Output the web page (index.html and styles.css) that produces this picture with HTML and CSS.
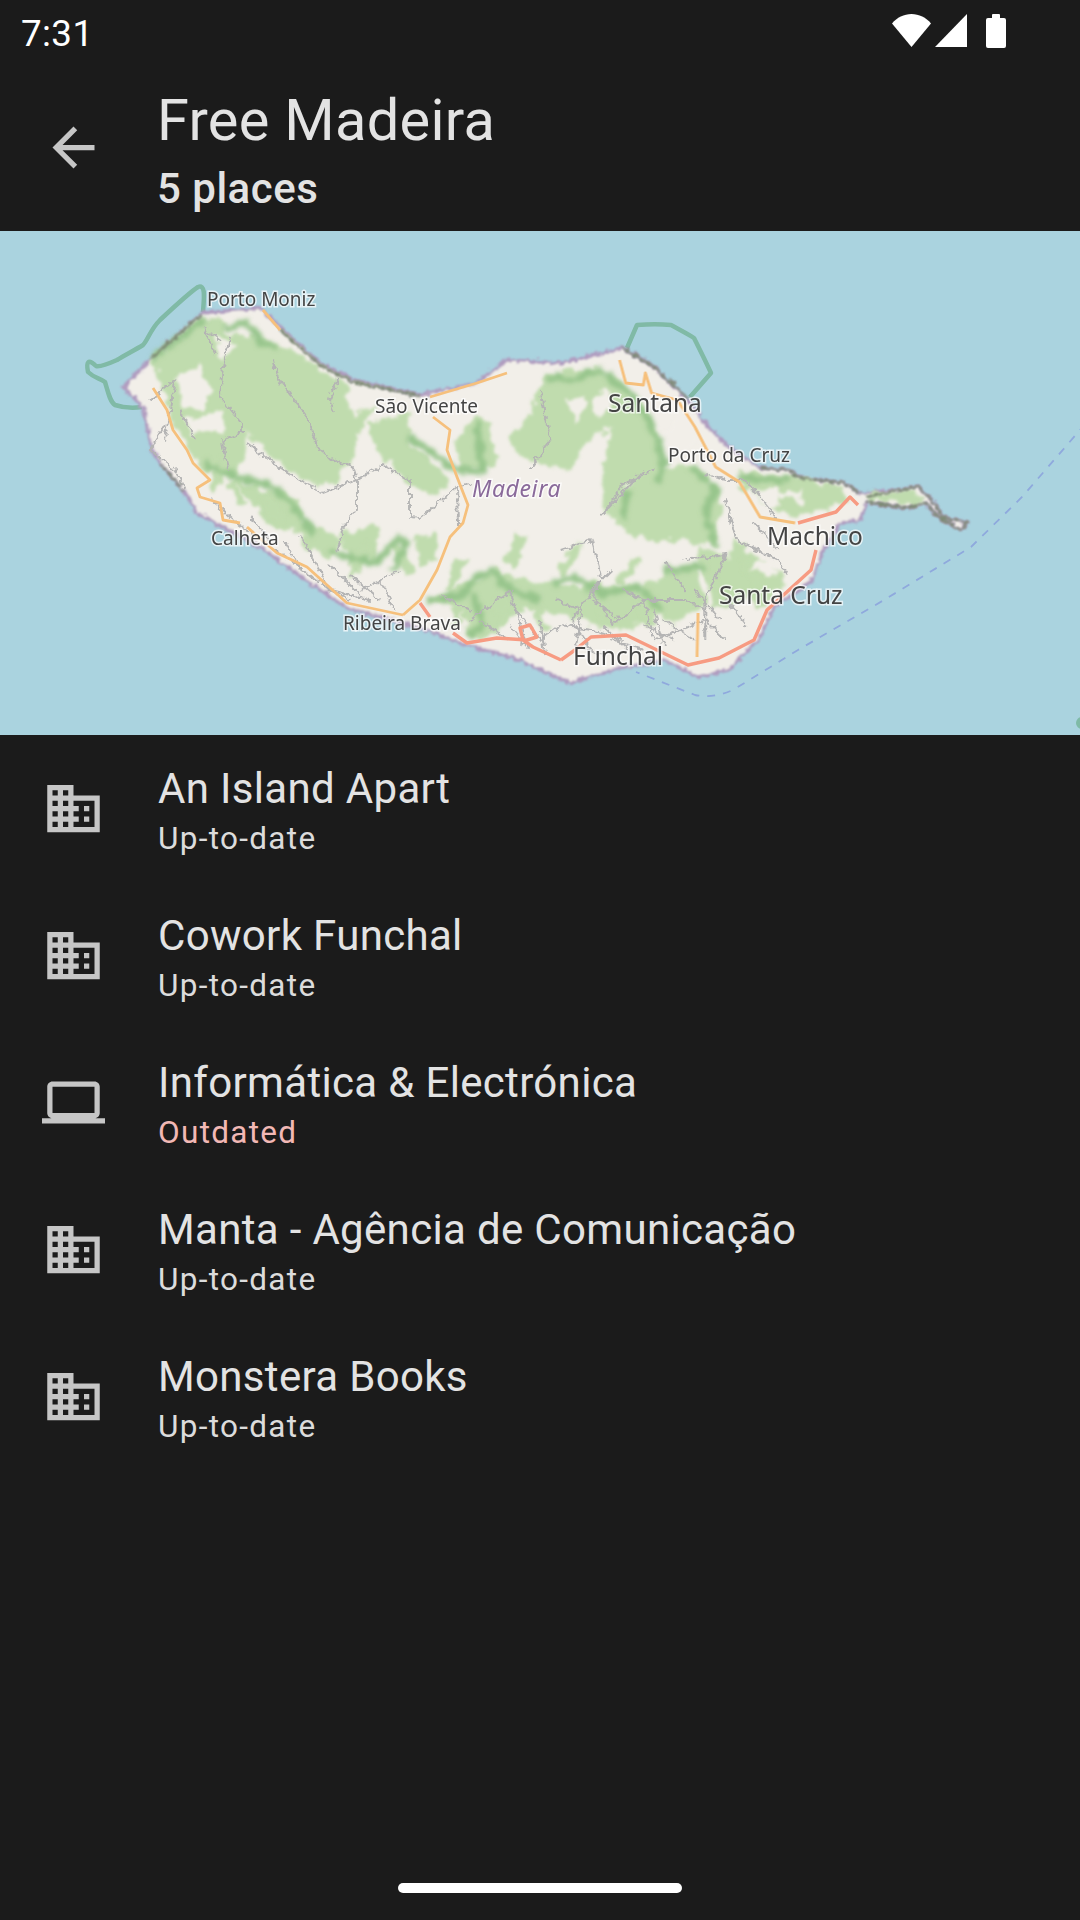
FILE: index.html
```html
<!DOCTYPE html>
<html lang="en">
<head>
    <meta charset="UTF-8">
    <meta name="viewport" content="width=device-width, initial-scale=1.0">
    <title>Free Madeira</title>
    <link rel="stylesheet" href="styles.css">
</head>
<body>
    <svg class="defs" width="0" height="0">
        <symbol id="icon-domain" viewBox="0 0 24 24">
            <path d="M12 7V3H2v18h20V7H12zM6 19H4v-2h2v2zm0-4H4v-2h2v2zm0-4H4V9h2v2zm0-4H4V5h2v2zm4 12H8v-2h2v2zm0-4H8v-2h2v2zm0-4H8V9h2v2zm0-4H8V5h2v2zm10 12h-8v-2h2v-2h-2v-2h2v-2h-2V9h8v10zm-2-8h-2v2h2v-2zm0 4h-2v2h2v-2z"/>
        </symbol>
        <symbol id="icon-computer" viewBox="0 0 24 24">
            <path d="M20 18c1.1 0 1.99-.9 1.99-2L22 6c0-1.1-.9-2-2-2H4c-1.1 0-2 .9-2 2v10c0 1.1.9 2 2 2H0v2h24v-2h-4zM4 6h16v10H4V6z"/>
        </symbol>
    </svg>

    <div class="status-bar">
        <span class="time">7:31</span>
        <div class="status-icons">
            <svg width="39" height="33" viewBox="0 0 39 33"><path d="M19.5 33L0 9.5C5 3.5 12 0 19.5 0S34 3.5 39 9.5z"/></svg>
            <svg class="signal" width="32" height="33" viewBox="0 0 32 33"><path d="M0 33L32 0v33z"/></svg>
            <svg class="battery" width="20" height="34" viewBox="0 0 20 34"><path d="M6 1a1 1 0 0 1 1-1h6a1 1 0 0 1 1 1v3h4a2 2 0 0 1 2 2v26a2 2 0 0 1-2 2H2a2 2 0 0 1-2-2V6a2 2 0 0 1 2-2h4z"/></svg>
        </div>
    </div>

    <header class="app-bar">
        <svg class="icon" viewBox="0 0 24 24"><path d="M20 11H7.83l5.59-5.59L12 4l-8 8 8 8 1.41-1.41L7.83 13H20v-2z"/></svg>
        <div class="app-title">
            <h1>Free Madeira</h1>
            <p>5 places</p>
        </div>
    </header>

    <svg class="map" viewBox="0 231 1080 504" width="1080" height="504">
        <defs>
            <filter id="rough" x="-5%" y="-5%" width="110%" height="110%">
                <feTurbulence type="fractalNoise" baseFrequency="0.08" numOctaves="3" seed="4"/>
                <feDisplacementMap in="SourceGraphic" scale="16" xChannelSelector="R" yChannelSelector="G"/>
                <feGaussianBlur stdDeviation="1.8"/>
            </filter>
            <filter id="band" x="-5%" y="-5%" width="110%" height="110%">
                <feTurbulence type="fractalNoise" baseFrequency="0.11" numOctaves="3" seed="7"/>
                <feDisplacementMap in="SourceGraphic" scale="10" xChannelSelector="R" yChannelSelector="G"/>
                <feGaussianBlur stdDeviation="2"/>
            </filter>
            <filter id="wiggle" x="-5%" y="-5%" width="110%" height="110%">
                <feTurbulence type="fractalNoise" baseFrequency="0.16" numOctaves="3" seed="9"/>
                <feDisplacementMap in="SourceGraphic" scale="8" xChannelSelector="R" yChannelSelector="G"/>
                <feGaussianBlur stdDeviation="0.6"/>
            </filter>
            <filter id="coast" x="-5%" y="-5%" width="110%" height="110%">
                <feTurbulence type="fractalNoise" baseFrequency="0.2" numOctaves="2" seed="3"/>
                <feDisplacementMap in="SourceGraphic" scale="7" xChannelSelector="R" yChannelSelector="G"/>
                <feGaussianBlur stdDeviation="0.8"/>
            </filter>
            <filter id="soft"><feGaussianBlur stdDeviation="0.7"/></filter>
        </defs>

        <g class="boundary" filter="url(#soft)">
            <path d="M1085 424L1080 430L1022 497L971 547L884 600L798 650L733 690C716 697 705 697 695 695L636 672"/>
        </g>
        <circle class="islet" cx="1082" cy="723" r="6"/>

        <g class="protected" filter="url(#soft)">
            <path d="M203 312C204 298 206 284 198 287C190 292 175 306 160 320C150 330 148 340 143 345C135 350 125 355 117 360C108 364 100 367 96 366C88 358 86 362 88 372C94 378 100 378 105 382C108 392 110 402 115 405C124 408 134 408 142 407"/>
            <path d="M627 348L637 325C650 324 660 324 671 325C680 330 688 334 694 338C700 350 706 362 711 373L690 397"/>
        </g>

        <path class="land" filter="url(#coast)" d="M123 387L153 357L203 313L260 308L280 327L320 363L353 380L420 395L477 383L507 360L561 363L574 360L623 348L654 367L688 400L705 423L728 447L760 468L788 470L801 478L843 483L860 493L898 490L919 487L932 500L943 517L967 523L961 530L936 515L925 502L909 508L867 502L860 520L840 523L822 553L812 580L774 607L760 637L729 670L698 677L664 660L620 668L571 683L540 670L520 660L460 643L427 630L347 608L310 583L260 547L197 513L183 490L160 463L152 450L143 407z"/>

        <g class="green-light" filter="url(#rough)">
            <path d="M227 333L265 340L280 345L330 375L350 385L345 400L355 415L375 405L355 440L353 460L345 470L340 482L320 485L293 473L267 450L243 433L225 400L225 370z"/>
            <path d="M370 423L410 413L407 440L443 473L453 483L427 497L407 480L383 460L370 440z"/>
            <path d="M473 417L490 420L497 470L460 472L455 440z"/>
            <path d="M340 533L380 523L378 560L350 565z"/>
            <path d="M413 537L437 535L437 560L420 567z"/>
            <path d="M150 362L205 318L228 322L225 390L245 440L240 475L205 472L175 430L165 395z"/>
            <path d="M300 520L345 540L330 560L305 545z"/>
            <path d="M233 480L300 500L305 535L270 525z"/>
            <path d="M427 600L493 572L540 582L540 612L520 612L487 637L467 637L462 610z"/>
            <g transform="translate(-17.8 0) scale(1.033 1)">
                <path d="M507 440L530 415L545 375L597 368L627 392L650 425L660 465L650 478L625 480L605 510L600 470L610 430L590 435L570 470L530 460z"/>
                <path d="M603 510L640 470L690 465L715 495L712 547L680 540L640 540L620 530z"/>
                <path d="M733 473L780 477L833 487L837 503L793 517L757 507z"/>
                <path d="M857 495L905 492L915 505L897 505L860 500z"/>
                <path d="M727 540L780 580L753 607L713 573z"/>
                <path d="M690 545L720 555L740 600L710 610z"/>
                <path d="M540 582L637 587L657 613L620 632L560 615L540 612z"/>
                <path d="M630 590L690 560L700 600L670 625z"/>
            </g>
        </g>
        <g class="streak" filter="url(#rough)">
            <path d="M460 600L455 628M500 590L505 625M535 600L545 632M600 600L605 628M640 600L652 628"/>
            <path d="M450 590L462 560M510 565L522 535M560 575L578 545M620 585L635 560"/>
            <path d="M365 545L352 578M395 545L410 575M230 480L245 505M265 495L280 525"/>
            <path d="M225 460L210 490M700 560L720 590M745 560L760 590M740 490L760 475"/>
        </g>
        <g class="white-patch" filter="url(#rough)">
            <path d="M178 375L200 362L212 392L205 412L182 405z"/>
            <path d="M185 418L222 412L225 430L195 435z"/>
            <path d="M215 335L235 345L222 360z"/>
            <g transform="translate(-17.8 0) scale(1.033 1)">
                <path d="M750 495L770 485L775 505L755 512z"/>
                <path d="M590 400L605 385L610 410L595 420z"/>
                <path d="M655 440L680 405L690 440L670 465z"/>
                <path d="M770 490L795 490L790 505z"/>
                <path d="M565 400L585 395L575 425z"/>
                <path d="M745 570L760 555L770 575z"/>
            </g>
        </g>
        <g class="ridge" filter="url(#band)">
            <path d="M150 360L205 318M223 330L247 323L263 343L277 347"/>
            <path d="M203 463L240 478L273 487L293 505L313 533"/>
            <path d="M327 550L360 560L377 563L397 537L407 543L393 570"/>
            <path d="M407 437L423 447L450 467L480 473M477 423L483 473"/>
            <path d="M427 600L460 597L477 577L493 570L510 590L540 600M473 593L483 627L467 637"/>
            <g transform="translate(-17.8 0) scale(1.033 1)">
                <path d="M547 377L573 380L597 370L627 393L647 423L660 460L653 483"/>
                <path d="M687 467L710 490L700 513L710 547"/>
                <path d="M553 583L573 577L600 593L637 587L657 610M660 570L700 567"/>
                <path d="M733 478L780 480M620 520L625 490"/>
            </g>
        </g>

        <g class="road-grey" filter="url(#wiggle)">
            <path d="M230 337L223 367L220 397L242 423L242 433L223 440L228 470"/>
            <path d="M273 360L277 377L307 417L317 447L333 460L353 467L357 480L357 510L343 527L337 553"/>
            <path d="M247 443L293 477L323 493L357 480L383 465L410 480L410 517L420 518L457 487L470 483"/>
            <path d="M457 487L458 527M338 380L330 400L335 412"/>
            <path d="M165 425L150 450L175 470L185 490M212 500L240 525L290 560L330 590L370 600"/>
            <path d="M470 620L510 590L525 640M300 535L330 590L350 600"/>
            <path d="M360 590L400 570M440 595L470 610"/>
            <path d="M350 575L380 600M380 580L395 610M330 565L360 595M285 540L300 570M250 515L270 540"/>
            <path d="M150 400L175 380L165 440M180 410L195 440M220 340L205 330L215 355"/>
            <g transform="translate(-17.8 0) scale(1.033 1)">
                <path d="M650 470L620 485L600 515L640 470M610 570L590 590L610 625L640 600L680 600L700 610M720 500L730 540L770 560L780 575"/>
                <path d="M560 550L590 540L600 580L570 620L590 650M620 590L640 600L650 640L700 620L720 640M510 600L540 640L560 625L590 630L620 640M680 560L720 555L700 600L700 640"/>
                <path d="M700 475L720 480L740 480L770 520M540 390L550 440L530 470"/>
                <path d="M555 600L580 610L575 645L600 655M610 640L640 650M590 600L620 620M640 625L670 640M540 620L545 655M510 625L530 650M480 620L510 640"/>
                <path d="M660 620L690 640M720 600L740 625M745 520L770 550M660 560L680 590M600 625L625 650M650 610L660 645M690 590L715 620"/>
            </g>
        </g>
        <path class="coast-dark" filter="url(#coast)" d="M280 330L320 365L353 382L420 396M153 357L200 316M623 348L654 367L688 398M760 468L788 470L801 478L843 483L860 493M867 497L898 490L919 487L932 500L943 517L967 523L961 530L936 515L925 502L909 508L867 502M160 463L183 490"/>

        <g class="road-orange" filter="url(#soft)">
            <path d="M433 417L450 430L447 450L457 477L468 505L463 523L450 537L437 570L420 600L403 615"/>
            <path d="M430 397L477 383L507 373"/>
            <path d="M153 388L167 410L173 430L187 450L193 463L210 480L197 488L200 497L220 503L223 520L240 523"/>
            <path d="M247 527L277 553L307 567L347 603L403 615"/>
            <path d="M263 310L280 330"/>
            <g transform="translate(-17.8 0) scale(1.033 1)">
                <path d="M617 360L623 383L640 385L642 373L648 393L673 400L690 427L710 467L733 482L753 517L787 523"/>
                <path d="M693 613L692 657"/>
            </g>
        </g>
        <g class="road-red" filter="url(#soft)">
            <path d="M420 603L430 617M453 633L467 643L497 638L527 640L537 637L530 625L520 628L523 640L533 647L561 660"/>
            <path d="M561 660L575 650L591 637L626 635L657 650L688 665L719 658L754 640L767 610L811 570L816 550"/>
            <path d="M798 523L836 512L850 497L858 505"/>
        </g>

        <g class="labels">
            <text x="207" y="306">Porto Moniz</text>
            <text x="375" y="413">São Vicente</text>
            <text x="211" y="545">Calheta</text>
            <text x="343" y="630">Ribeira Brava</text>
            <text x="668" y="462">Porto da Cruz</text>
            <text class="town" x="608" y="412">Santana</text>
            <text class="town" x="767" y="545">Machico</text>
            <text class="town" x="719" y="604">Santa Cruz</text>
            <text class="town" x="573" y="665">Funchal</text>
            <text class="island" x="472" y="497">Madeira</text>
        </g>
    </svg>

    <ul class="places">
        <li>
            <svg class="icon"><use href="#icon-domain"/></svg>
            <div>
                <h2>An Island Apart</h2>
                <p>Up-to-date</p>
            </div>
        </li>
        <li>
            <svg class="icon"><use href="#icon-domain"/></svg>
            <div>
                <h2>Cowork Funchal</h2>
                <p>Up-to-date</p>
            </div>
        </li>
        <li>
            <svg class="icon"><use href="#icon-computer"/></svg>
            <div>
                <h2>Informática &amp; Electrónica</h2>
                <p class="outdated">Outdated</p>
            </div>
        </li>
        <li>
            <svg class="icon"><use href="#icon-domain"/></svg>
            <div>
                <h2>Manta - Agência de Comunicação</h2>
                <p>Up-to-date</p>
            </div>
        </li>
        <li>
            <svg class="icon"><use href="#icon-domain"/></svg>
            <div>
                <h2>Monstera Books</h2>
                <p>Up-to-date</p>
            </div>
        </li>
    </ul>

    <div class="gesture-bar"></div>
</body>
</html>
```

FILE: styles.css
```css
body {
    font-family: Roboto, sans-serif;
    margin: 0;
    padding: 0;
    width: 1080px;
    height: 1920px;
    overflow: hidden;
    background-color: #1b1b1b;
    display: flex;
    flex-direction: column;
}
.defs {
    position: absolute;
}
.status-bar {
    height: 63px;
    flex: none;
    padding: 0 74px 0 21px;
    display: flex;
    justify-content: space-between;
    align-items: center;
    color: white;
}
.time {
    font-size: 36.75px;
    line-height: 63px;
    padding-top: 4px;
    letter-spacing: 0.4px;
}
.status-icons {
    display: flex;
    align-items: flex-start;
    margin-top: -2px;
}
.status-icons svg {
    fill: white;
    display: block;
}
.status-icons .signal {
    margin-left: 4px;
}
.status-icons .battery {
    margin-left: 19px;
}
.icon {
    width: 63px;
    height: 63px;
    flex: none;
    fill: #c6c6c6;
    margin: 0 53px 0 42px;
}
.app-bar {
    height: 168px;
    flex: none;
    display: flex;
    align-items: center;
}
.app-title {
    padding-top: 9px;
    margin-left: -1px;
}
.app-bar h1 {
    margin: 0;
    font-size: 57.75px;
    font-weight: 400;
    line-height: 66px;
    letter-spacing: 0.3px;
    color: #e3e3e3;
}
.app-bar p {
    margin: 9px 0 0;
    font-size: 42px;
    font-weight: 500;
    line-height: 54px;
    letter-spacing: 0.5px;
    color: #e3e3e3;
}
.map {
    display: block;
    flex: none;
    background-color: #aad3df;
}
.boundary path {
    fill: none;
    stroke: #8fa9dd;
    stroke-width: 1.8;
    stroke-dasharray: 8 8;
}
.islet {
    fill: #7fbaa6;
}
.protected path {
    fill: none;
    stroke: #80baa6;
    stroke-width: 4.5;
    stroke-linejoin: round;
}
.land {
    fill: #f2efe9;
    stroke: #b09cc0;
    stroke-width: 3.5;
    stroke-linejoin: round;
}
.green-light {
    fill: #c0dcae;
}
.streak path {
    fill: none;
    stroke: #c0dcae;
    stroke-width: 9;
}
.white-patch {
    fill: #f2efe9;
}
.ridge path {
    fill: none;
    stroke: #97c58c;
    stroke-width: 7;
    stroke-linejoin: round;
}
.road-grey path {
    fill: none;
    stroke: #b4b4b4;
    stroke-width: 1.9;
}
.coast-dark {
    fill: none;
    stroke: #7d8a74;
    stroke-width: 2.4;
}
.road-orange path {
    fill: none;
    stroke: #f6c07c;
    stroke-width: 2.8;
    stroke-linejoin: round;
}
.road-red path {
    fill: none;
    stroke: #f79b82;
    stroke-width: 3.4;
    stroke-linejoin: round;
}
.labels text {
    font-family: "Noto Sans", sans-serif;
    font-size: 19px;
    fill: #444;
    stroke: rgba(255,255,255,0.7);
    stroke-width: 3px;
    paint-order: stroke;
    filter: blur(0.6px);
}
.labels .town {
    font-size: 24.5px;
}
.labels .island {
    font-size: 23px;
    font-style: italic;
    fill: #8a6a9a;
    letter-spacing: 0.6px;
}
.places {
    list-style: none;
    margin: 0;
    padding: 0;
    flex: 1;
}
.places li {
    height: 147px;
    box-sizing: border-box;
    padding-top: 5px;
    display: flex;
    align-items: center;
}
.places .icon {
    margin-top: -5px;
}
.places h2 {
    margin: 0;
    font-size: 42px;
    font-weight: 400;
    line-height: 50px;
    letter-spacing: 0.33px;
    color: #e3e3e3;
}
.places p {
    margin: 5px 0 0;
    font-size: 31.5px;
    line-height: 40px;
    letter-spacing: 1.3px;
    color: #dcdcdc;
}
.places .outdated {
    color: #f2b8b5;
}
.gesture-bar {
    width: 284px;
    height: 10px;
    flex: none;
    margin: 0 auto 27px;
    border-radius: 5px;
    background-color: white;
}
```
